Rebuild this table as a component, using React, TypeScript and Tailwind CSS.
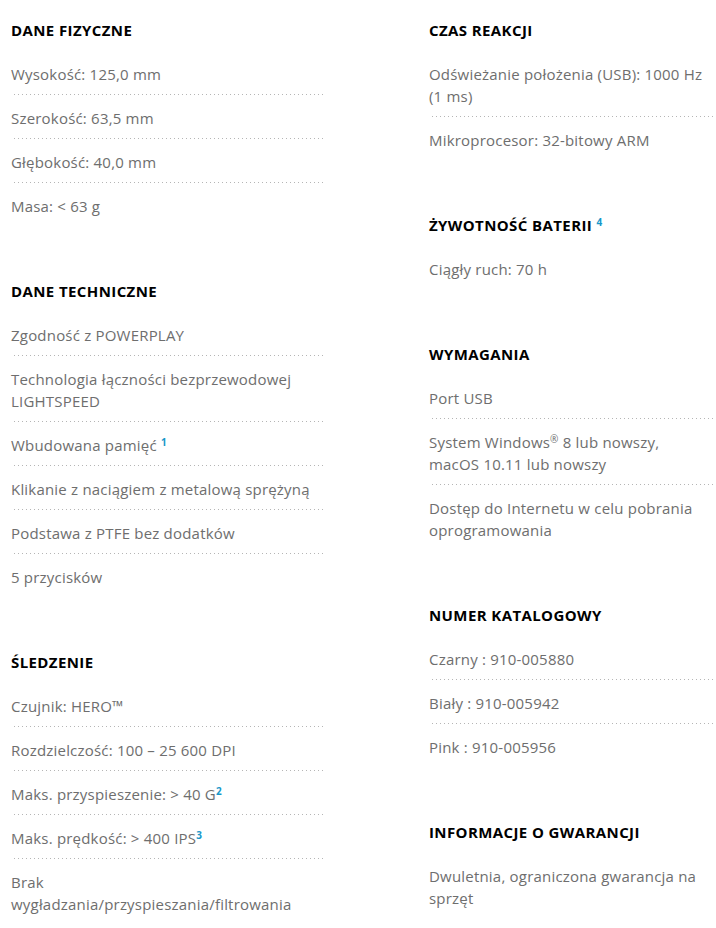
import React from "react";

const Sup = ({ n }: { n: string }) => (
  <sup className="text-[10px] font-bold text-[#1797c9]">{n}</sup>
);

const Section = ({ title, items }: { title: React.ReactNode; items: React.ReactNode[] }) => (
  <div>
    {/* heading */}
    <h3 className="leading-[22px] text-[15px] font-bold uppercase text-black mb-[11px] tracking-[0.4px]">
      {title}
    </h3>
    <ul>
      {items.map((it, i) => (
        <li
          key={i}
          className={`pt-[11px] pb-[10px] leading-[22px] text-[15px] tracking-[0.2px] text-[#6e6e6e] ${
            i < items.length - 1
              ? "border-b border-transparent bg-[linear-gradient(to_right,#b5b5b5_1px,transparent_1px)] bg-[length:4px_1px] bg-bottom bg-repeat-x"
              : ""
          }`}
        >
          {it}
        </li>
      ))}
    </ul>
  </div>
);

const App = () => {
  return (
    <div className="w-[716px] overflow-hidden bg-white font-['Open_Sans',sans-serif]">
      <div className="grid grid-cols-[314px_314px] gap-x-[104px] pl-[11px] pt-[19px]">
        {/* left column =========================== */}
        <div className="flex flex-col gap-[53px]">
          <Section
            title="Dane fizyczne"
            items={["Wysokość: 125,0 mm", "Szerokość: 63,5 mm", "Głębokość: 40,0 mm", "Masa: < 63 g"]}
          />
          <Section
            title="Dane techniczne"
            items={[
              "Zgodność z POWERPLAY",
              <>
                Technologia łączności bezprzewodowej
                <br />
                LIGHTSPEED
              </>,
              <>
                Wbudowana pamięć <Sup n="1" />
              </>,
              "Klikanie z naciągiem z metalową sprężyną",
              "Podstawa z PTFE bez dodatków",
              "5 przycisków",
            ]}
          />
          <Section
            title="Śledzenie"
            items={[
              "Czujnik: HERO™",
              "Rozdzielczość: 100 – 25 600 DPI",
              <>
                Maks. przyspieszenie: &gt; 40 G<Sup n="2" />
              </>,
              <>
                Maks. prędkość: &gt; 400 IPS<Sup n="3" />
              </>,
              <>
                Brak
                <br />
                wygładzania/przyspieszania/filtrowania
              </>,
            ]}
          />
        </div>

        {/* right column =========================== */}
        <div className="flex flex-col gap-[53px]">
          <Section
            title="Czas reakcji"
            items={[
              <>
                Odświeżanie położenia (USB): 1000 Hz
                <br />
                (1 ms)
              </>,
              "Mikroprocesor: 32-bitowy ARM",
            ]}
          />
          <Section
            title={
              <>
                Żywotność baterii <Sup n="4" />
              </>
            }
            items={["Ciągły ruch: 70 h"]}
          />
          <Section
            title="Wymagania"
            items={[
              "Port USB",
              <>
                System Windows<sup className="text-[10px]">®</sup> 8 lub nowszy,
                <br />
                macOS 10.11 lub nowszy
              </>,
              <>
                Dostęp do Internetu w celu pobrania
                <br />
                oprogramowania
              </>,
            ]}
          />
          <Section
            title="Numer katalogowy"
            items={["Czarny : 910-005880", "Biały : 910-005942", "Pink : 910-005956"]}
          />
          <Section
            title="Informacje o gwarancji"
            items={[
              <>
                Dwuletnia, ograniczona gwarancja na
                <br />
                sprzęt
              </>,
            ]}
          />
        </div>
      </div>
    </div>
  );
};

export default App;
